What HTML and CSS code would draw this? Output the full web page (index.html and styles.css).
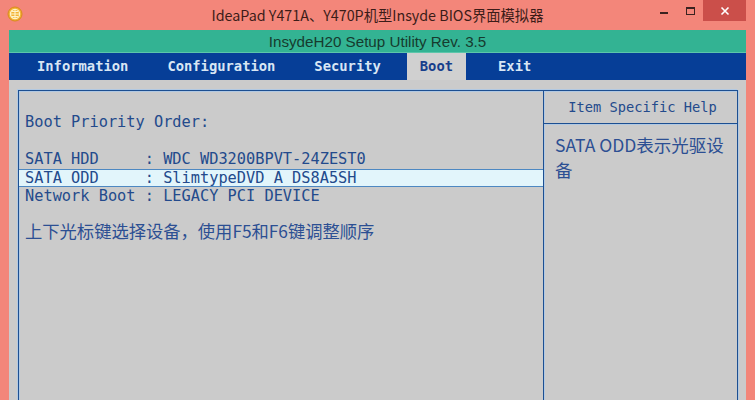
FILE: index.html
```html
<!DOCTYPE html>
<html lang="zh-CN">
<head>
<meta charset="utf-8">
<title>IdeaPad BIOS</title>
<link rel="stylesheet" href="styles.css">
</head>
<body>
<div class="window">
  <div class="titlebar">
    <div class="app-icon">
      <svg width="16" height="16" viewBox="0 0 16 16">
        <circle cx="8" cy="8" r="7" fill="#f2b233" stroke="#d98a1c" stroke-width="1"/>
        <circle cx="8" cy="8" r="4.6" fill="none" stroke="#fff3c8" stroke-width="1.2"/>
        <path d="M3.5 8H12.5M8 3.5V12.5M5 5.5H11M5 10.5H11" stroke="#fff3c8" stroke-width="1.1" fill="none"/>
      </svg>
    </div>
    <div class="title">IdeaPad Y471A、Y470P机型Insyde BIOS界面模拟器</div>
    <div class="winbtns">
      <div class="wbtn min"><span class="min-bar"></span></div>
      <div class="wbtn max"><span class="max-box"></span></div>
      <div class="wbtn close">
        <svg width="10" height="10" viewBox="0 0 10 10"><path d="M1.5 1.5L8.5 8.5M8.5 1.5L1.5 8.5" stroke="#fff" stroke-width="1.6"/></svg>
      </div>
    </div>
  </div>
  <div class="client">
    <div class="utility">InsydeH20 Setup Utility Rev. 3.5</div>
    <div class="menu">
      <div class="menu-item">Information</div>
      <div class="menu-item">Configuration</div>
      <div class="menu-item">Security</div>
      <div class="menu-item active">Boot</div>
      <div class="menu-item exit">Exit</div>
    </div>
    <div class="body">
      <div class="panel">
        <div class="main-col">
          <div class="line heading">Boot Priority Order:</div>
          <div class="rows">
            <div class="row">SATA HDD     : WDC WD3200BPVT-24ZEST0</div>
            <div class="row selected">SATA ODD     : SlimtypeDVD A DS8A5SH</div>
            <div class="row">Network Boot : LEGACY PCI DEVICE</div>
          </div>
          <div class="hint">上下光标键选择设备，使用F5和F6键调整顺序</div>
        </div>
        <div class="help-col">
          <div class="help-head">Item Specific Help</div>
          <div class="help-text">SATA ODD表示光驱设备</div>
        </div>
      </div>
    </div>
  </div>
</div>
</body>
</html>
```

FILE: styles.css
```css
* { box-sizing: border-box; }
html, body {
  margin: 0;
  padding: 0;
  width: 755px;
  height: 400px;
  overflow: hidden;
  background: #f3867a;
}
.window {
  width: 755px;
  height: 400px;
  display: flex;
  flex-direction: column;
  background: #f3867a;
}
.titlebar {
  height: 30px;
  flex: none;
  display: flex;
  align-items: center;
  position: relative;
}
.app-icon {
  width: 16px;
  height: 16px;
  margin-left: 7px;
  margin-top: -2px;
  display: flex;
}
.title {
  position: absolute;
  left: 0;
  right: 0;
  top: 5px;
  text-align: center;
  font-family: "Noto Sans CJK SC", "Noto Sans", sans-serif;
  font-size: 14.3px;
  line-height: 20px;
  color: #3b1c18;
}
.winbtns {
  margin-left: auto;
  margin-right: 9px;
  display: flex;
  align-self: flex-start;
  height: 21px;
}
.wbtn {
  height: 21px;
  display: flex;
  align-items: center;
  justify-content: center;
}
.wbtn.min { width: 26px; }
.min-bar {
  width: 8px;
  height: 2px;
  background: #3a2220;
  margin-top: 5px;
}
.wbtn.max { width: 26px; }
.max-box {
  width: 9px;
  height: 8px;
  border: 1px solid #3a2220;
  border-top-width: 2px;
}
.wbtn.close {
  width: 43px;
  background: #cb4f4a;
}
.client {
  flex: 1;
  margin: 0 9px;
  display: flex;
  flex-direction: column;
  min-height: 0;
}
.utility {
  height: 23px;
  flex: none;
  background: #33b393;
  border-bottom: 1px solid #5cc6aa;
  text-align: center;
  font-family: "Liberation Sans", Arial, sans-serif;
  font-size: 15.2px;
  line-height: 23px;
  color: #163b2e;
}
.menu {
  height: 27px;
  flex: none;
  background: #063e97;
  display: flex;
  padding-left: 15px;
  gap: 13px;
}
.menu-item {
  padding: 0 13px;
  font-family: "DejaVu Sans Mono", monospace;
  font-weight: bold;
  font-size: 13.8px;
  line-height: 27px;
  color: #d8e6f4;
}
.menu-item.active {
  background: #d0d0d0;
  color: #173e8c;
}
.menu-item.exit { margin-left: 6px; }
.body {
  flex: 1;
  background: #cbcbcb;
  padding: 10px 0 0 9px;
  min-height: 0;
}
.panel {
  width: 720px;
  height: 330px;
  border: 1px solid #1d4f91;
  box-shadow: inset 1px 1px 0 #b2c9e2, -1px -1px 0 #b2c9e2, 1px 0 0 #b2c9e2;
  display: flex;
  color: #234a8c;
}
.main-col {
  width: 525px;
  flex: none;
  padding-top: 22px;
  border-right: 1px solid #1d4f91;
  box-shadow: 1px 0 0 #b2c9e2;
}
.line, .row {
  font-family: "DejaVu Sans Mono", monospace;
  font-size: 15.3px;
  line-height: 18px;
  white-space: pre;
  padding-left: 6px;
}
.heading {
  margin-bottom: 19px;
}
.row {
  height: 18.5px;
  line-height: 18.5px;
}
.row.selected {
  background: #e2f5fb;
  border-top: 1px solid #4d88c2;
  border-bottom: 1px solid #4d88c2;
  line-height: 16.5px;
}
.hint {
  margin-top: 16px;
  padding-left: 6px;
  font-family: "Noto Sans CJK SC", sans-serif;
  font-size: 17.3px;
  line-height: 18px;
  color: #2c4f93;
}
.help-col {
  flex: 1;
  display: flex;
  flex-direction: column;
}
.help-head {
  height: 33px;
  border-bottom: 1px solid #1d4f91;
  box-shadow: 0 1px 0 #b2c9e2;
  text-align: center;
  font-family: "DejaVu Sans Mono", monospace;
  font-size: 13.7px;
  line-height: 33px;
  color: #234a8c;
  padding-left: 4px;
}
.help-text {
  padding: 8px 8px 0 11px;
  font-family: "Noto Sans CJK SC", "Noto Sans", sans-serif;
  font-size: 17.5px;
  line-height: 25px;
  color: #2c4f93;
}
```
